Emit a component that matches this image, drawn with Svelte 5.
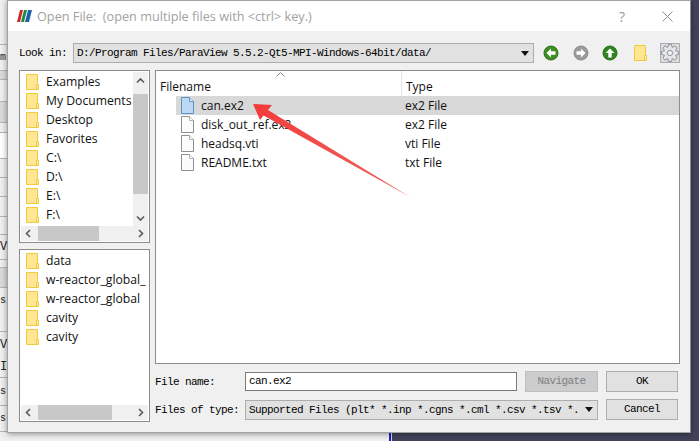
<script>
  const places = ['Examples', 'My Documents', 'Desktop', 'Favorites', 'C:\\', 'D:\\', 'E:\\', 'F:\\'];
  const recent = ['data', 'w-reactor_global_', 'w-reactor_global', 'cavity', 'cavity'];
  const files = [
    { name: 'can.ex2', type: 'ex2 File', sel: true },
    { name: 'disk_out_ref.ex2', type: 'ex2 File' },
    { name: 'headsq.vti', type: 'vti File' },
    { name: 'README.txt', type: 'txt File' }
  ];
  const strip = [
    { h: 45, c: 'light' }, { h: 26, c: 'light', t: 'ms' }, { h: 9, c: 'mid' }, { h: 22, c: 'light' }, { h: 21, c: 'mid' },
    { h: 10, c: 'light' }, { h: 26, c: 'white' }, { h: 19, c: 'light' }, { h: 19, c: 'light' }, { h: 20, c: 'light' },
    { h: 18, c: 'light' }, { h: 25, c: 'light', t: 'V', big: true }, { h: 8, c: 'light' }, { h: 20, c: 'mid' },
    { h: 26, c: 'light nb', t: 'si' }, { h: 18, c: 'light' },
    { h: 25, c: 'light nb', t: 'V', big: true }, { h: 21, c: 'light', t: 'I', big: true }, { h: 28, c: 'light', t: 's' },
    { h: 26, c: 'light', t: 's' }, { h: 9, c: 'light nb' }
  ];
  function gear() {
    const n = 8, pts = [];
    for (let i = 0; i < n; i++) {
      const a = (i / n) * Math.PI * 2;
      const s = Math.PI / n;
      [[a - s * 0.95, 6], [a - s * 0.45, 8.6], [a + s * 0.45, 8.6], [a + s * 0.95, 6]].forEach(([t, r]) => {
        pts.push((10 + r * Math.cos(t)).toFixed(2) + ' ' + (10 + r * Math.sin(t)).toFixed(2));
      });
    }
    return 'M' + pts.join('L') + 'Z';
  }
</script>

{#snippet folder()}
  <svg class="ficon" width="13" height="16" viewBox="0 0 13 16">
    <path d="M.5.5h11v10h1v5H.5z" fill="#ffe694" stroke="#f0c93c"/>
    <path d="M10.5 15.5v-5h2" fill="#fff3c4" stroke="#f0c93c"/>
  </svg>
{/snippet}

{#snippet fileIcon(sel)}
  <svg class="ficon" width="13" height="17" viewBox="0 0 13 17">
    <path d="M.5.5h8l4 4v12H.5z" fill={sel ? '#bcd9f3' : '#fbfbfb'} stroke={sel ? '#5d92c4' : '#8f8f8f'}/>
    <path d="M8.5.5v4h4" fill={sel ? '#e3f0fb' : '#fff'} stroke={sel ? '#5d92c4' : '#b0b0b0'}/>
  </svg>
{/snippet}

{#snippet chevron(dir)}
  <svg class="chev" width="9" height="9" viewBox="0 0 9 9">
    {#if dir === 'up'}<path d="M1 6.5l3.5-3.5 3.5 3.5" />
    {:else if dir === 'down'}<path d="M1 2.5l3.5 3.5 3.5-3.5" />
    {:else if dir === 'left'}<path d="M6 1L2.500 4.500 6 8" />
    {:else}<path d="M3 1l3.500 3.500L3 8" />{/if}
  </svg>
{/snippet}

{#snippet nav(fill, dark, rot)}
  <svg class="nav" width="16" height="16" viewBox="0 0 16 16">
    <circle cx="8" cy="8" r="7" fill={fill} stroke={dark}/>
    <path d="M8 3.5L3.6 8H6.3v4.5h3.4V8h2.7z" fill="#fff" transform="rotate({rot} 8 8)"/>
  </svg>
{/snippet}

<div class="stage">
  <div class="desktop">
    <div class="app">
      {#each strip as s}
        <div class="strip {s.c}" style="height:{s.h}px"><span class:big={s.big}>{s.t ?? ''}</span></div>
      {/each}
    </div>
    <div class="blue"></div>
    <div class="dark"></div>
  </div>

  <div class="dialog">
    <header class="title">
      <svg width="15" height="12" viewBox="0 0 15 12">
        <path d="M3 0h3L3 12H0z" fill="#c8282e"/>
        <path d="M7 0h3L7 12H4z" fill="#1f8a3c"/>
        <path d="M11 0h4l-3 12H8z" fill="#1c62a8"/>
      </svg>
      <span class="t">Open File:  (open multiple files with &lt;ctrl&gt; key.)</span>
      <span class="help">?</span>
      <svg class="close" width="11" height="11" viewBox="0 0 11 11"><path d="M.5.5l10 10M10.5.5l-10 10" stroke="#8a8a8a" fill="none"/></svg>
    </header>

    <div class="body">
      <div class="lookrow">
        <span class="mono lab">Look in:</span>
        <div class="combo lookcombo mono"><span>D:/Program Files/ParaView 5.5.2-Qt5-MPI-Windows-64bit/data/</span><i class="tri"></i></div>
        <div class="navs">
          {@render nav('#3c8d22', '#2a6f18', -90)}
          {@render nav('#9a9a9a', '#8a8a8a', 90)}
          {@render nav('#2f8620', '#236a16', 0)}
          <span class="newf">{@render folder()}</span>
          <button class="gear" aria-label="settings">
            <svg width="20" height="20" viewBox="0 0 20 20">
              <path d={gear()} fill="#e4e6ea" stroke="#8d939c"/>
              <circle cx="10" cy="10" r="2.6" fill="#f4f4f4" stroke="#8d939c"/>
            </svg>
          </button>
        </div>
      </div>

      <div class="main">
        <div class="side">
          <div class="panel first">
            <div class="ptop">
              <ul>
                {#each places as p}<li>{@render folder()}<span>{p}</span></li>{/each}
              </ul>
              <div class="vbar">
                <span class="arrow">{@render chevron('up')}</span>
                <div class="vtrack"><div class="vthumb"></div></div>
                <span class="arrow">{@render chevron('down')}</span>
              </div>
            </div>
            <div class="hbar first-h">
              <span class="arrow">{@render chevron('left')}</span>
              <div class="htrack"><div class="hthumb t1"></div></div>
              <span class="arrow">{@render chevron('right')}</span>
            </div>
          </div>
          <div class="panel second">
            <ul class="grow">
              {#each recent as p}<li>{@render folder()}<span>{p}</span></li>{/each}
            </ul>
            <div class="hbar">
              <span class="arrow">{@render chevron('left')}</span>
              <div class="htrack"><div class="hthumb t2"></div></div>
              <span class="arrow">{@render chevron('right')}</span>
            </div>
          </div>
        </div>

        <div class="right">
          <div class="tree">
            <div class="thead">
              <div class="hname">Filename<svg class="sort" width="9" height="5" viewBox="0 0 9 5"><path d="M.5 4.5l4-4 4 4" fill="none" stroke="#888"/></svg></div>
              <div class="htype">Type</div>
            </div>
            {#each files as f}
              <div class="trow" class:sel={f.sel}>
                <div class="cname">{@render fileIcon(f.sel)}<span>{f.name}</span></div>
                <div class="ctype">{f.type}</div>
              </div>
            {/each}
          </div>
          <div class="form mono">
            <span>File name:</span>
            <div class="input">can.ex2</div>
            <div class="btn disabled">Navigate</div>
            <div class="btn">OK</div>
            <span>Files of type:</span>
            <div class="combo typecombo"><span>Supported Files (plt* *.inp *.cgns *.cml *.csv *.tsv *.</span><i class="tri"></i></div>
            <div class="btn">Cancel</div>
          </div>
        </div>
      </div>
    </div>
  </div>

  <svg class="redarrow" width="699" height="441" viewBox="0 0 699 441">
    <defs>
      <linearGradient id="ra" x1="0" y1="0" x2="1" y2="0.6">
        <stop offset="0" stop-color="#f23a3a"/>
        <stop offset="1" stop-color="#f0605a"/>
      </linearGradient>
    </defs>
    <path d="M253 104L272 105 268 110 410 197 263.500 115.500 260 120z" fill="url(#ra)"/>
  </svg>
</div>

<style>
  :global(body) { margin: 0; background: #f0f0f0; }
  .stage { position: relative; width: 699px; height: 441px; overflow: hidden; font-family: "Open Sans", "Noto Sans", sans-serif; font-size: 12px; color: #111; }
  .desktop { display: flex; height: 100%; }
  .app { width: 389px; flex: none; background: #f0f0f0; }
  .strip { box-sizing: border-box; border-bottom: 1px solid #b5b5b5; font: 10px/1 "Liberation Mono", monospace; display: flex; align-items: center; color: #222; }
  .strip.light { background: #f0f0f0; }
  .strip.mid { background: #dadada; }
  .strip.white { background: #fff; }
  .strip.nb { border-bottom: 0; }
  .strip .big { font-size: 12px; }
  .blue { width: 2px; background: #1a1ad8; flex: none; border-right: 1px solid #d8d8d8; }
  .dark { flex: 1; background: #40435a; }

  .dialog { position: absolute; left: 7px; top: 0; width: 684px; height: 433px; box-sizing: border-box; border: 1px solid #a3a3a3; border-right-color: #8d8d8d; background: #f0f0f0; box-shadow: 0 1px 6px rgba(0,0,0,.4); display: flex; flex-direction: column; }
  .title { height: 30px; flex: none; background: #fff; display: flex; align-items: center; padding-left: 9px; box-sizing: border-box; }
  .title .t { margin-left: 5px; font-size: 12.7px; color: #a2a2a2; white-space: pre; flex: 1; }
  .help { font-size: 14px; color: #9a9a9a; margin-right: 37px; }
  .close { margin-right: 17px; }

  .body { flex: 1; padding: 12px 12px 0 11px; display: flex; flex-direction: column; gap: 7px; }
  .mono { font-family: "Liberation Mono", monospace; font-size: 11px; letter-spacing: -0.6px; color: #000; }
  .lookrow { display: flex; align-items: center; height: 20px; }
  .lab { width: 54px; flex: none; }
  .combo { box-sizing: border-box; border: 1px solid #adadad; background: #e1e1e1; display: flex; align-items: center; justify-content: space-between; padding: 0 4px 0 3px; white-space: pre; }
  .combo span { overflow: hidden; }
  .lookcombo { width: 461px; height: 20px; flex: none; }
  .tri { flex: none; width: 0; height: 0; border-left: 4px solid transparent; border-right: 4px solid transparent; border-top: 5px solid #111; }
  .navs { display: flex; align-items: center; margin-left: 9px; }
  .nav { margin-right: 14px; flex: none; }
  .nav:nth-child(2) { margin-right: 13px; }
  .nav:nth-child(3) { margin-right: 16px; }
  .newf { display: flex; margin-right: 13px; }
  .gear { box-sizing: border-box; width: 20px; height: 20px; padding: 0; background: #dcdcdc; border: 1px solid #adadad; display: flex; align-items: center; justify-content: center; }
  .gear svg { flex: none; }

  .main { display: flex; gap: 5px; flex: 1; align-items: flex-start; }
  .side { width: 131px; flex: none; display: flex; flex-direction: column; gap: 6px; }
  .panel { box-sizing: border-box; border: 1px solid #8c8c8c; background: #fff; display: flex; flex-direction: column; padding: 1px; height: 173px; }
  .ptop { display: flex; flex: 1; min-height: 0; }
  ul { list-style: none; margin: 0; padding: 0 0 0 5px; flex: 1; overflow: hidden; font-size: 12.2px; }
  .grow { flex: 1; }
  li { height: 19px; display: flex; align-items: center; gap: 7px; white-space: nowrap; }
  li span { line-height: 19px; }
  .ficon { flex: none; }
  .vbar { width: 15px; flex: none; background: #f0f0f0; display: flex; flex-direction: column; }
  .vtrack { flex: 1; padding: 6px 0 0; }
  .vthumb { height: 100px; background: #c8c8c8; }
  .arrow { flex: none; width: 15px; height: 16px; display: flex; align-items: center; justify-content: center; }
  .chev { fill: none; stroke: #5a5a5a; stroke-width: 1.6; }
  .hbar { height: 15px; flex: none; background: #f0f0f0; display: flex; align-items: center; }
  .htrack { flex: 1; height: 100%; }
  .hthumb { height: 100%; margin-left: 2px; }
  .hthumb.t1 { width: 61px; background: #c8c8c8; }
  .hthumb.t2 { width: 74px; background: #c8c8c8; }

  .right { width: 525px; flex: none; display: flex; flex-direction: column; gap: 7px; }
  .tree { box-sizing: border-box; height: 294px; border: 1px solid #8c8c8c; background: #fff; }
  .thead { height: 25px; display: flex; }
  .hname { box-sizing: border-box; width: 246px; padding: 6px 0 0 4px; border-right: 1px solid #e5e5e5; position: relative; line-height: 19px; }
  .sort { position: absolute; left: 120px; top: 1px; }
  .htype { padding: 6px 0 0 4px; line-height: 19px; }
  .trow { height: 19px; display: flex; margin-left: 20px; }
  .trow.sel { background: #d8d8d8; }
  .cname { width: 229px; display: flex; align-items: center; gap: 7px; padding-left: 5px; box-sizing: border-box; }
  .ctype { line-height: 19px; }

  .form { display: grid; grid-template-columns: 90px 272px 81px 80px; column-gap: 0; row-gap: 7px; align-items: center; }
  .input { box-sizing: border-box; height: 19px; border: 1px solid #7a7a7a; background: #fff; padding-left: 3px; line-height: 17px; }
  .btn { box-sizing: border-box; height: 21px; border: 1px solid #adadad; background: #e1e1e1; text-align: center; line-height: 19px; margin-left: 8px; }
  .btn.disabled { background: #cccccc; border-color: #bfbfbf; color: #808080; }
  .typecombo { grid-column: 2 / span 2; height: 20px; width: 353px; }
  .typecombo span { width: 335px; }

  .redarrow { position: absolute; left: 0; top: 0; pointer-events: none; }
</style>
